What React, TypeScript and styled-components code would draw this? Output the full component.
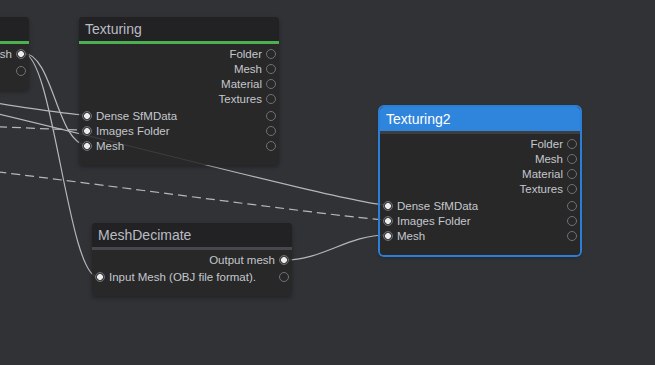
import React from "react";
import styled, { createGlobalStyle } from "styled-components";

const Global = createGlobalStyle`
  html, body { margin: 0; padding: 0; background: #313236; }
  #root { width: 655px; height: 365px; }
`;

const Canvas = styled.div`
  position: relative;
  width: 655px;
  height: 365px;
  overflow: hidden;
  background: #313236;
  font-family: "Liberation Sans", Arial, sans-serif;
`;

const EdgeLayer = styled.svg`
  position: absolute;
  left: 0;
  top: 0;
  width: 655px;
  height: 365px;
  overflow: visible;
`;

const NodeBox = styled.div<{ $selected?: boolean }>`
  position: absolute;
  width: 200px;
  border-radius: 4px;
  background: rgba(38, 38, 40, 0.86);
  box-shadow: ${(p) =>
    p.$selected ? "0 0 0 2px #2b7fd6, 0 2px 4px rgba(0,0,0,0.35)" : "0 2px 4px rgba(0,0,0,0.3)"};
  overflow: visible;
`;

const Header = styled.div<{ $blue?: boolean }>`
  height: 24px;
  line-height: 24px;
  padding: 0 6px;
  font-size: 14px;
  color: ${(p) => (p.$blue ? "#ffffff" : "#b9bdc3")};
  background: ${(p) => (p.$blue ? "#2f84dc" : "#222224")};
  border-radius: 4px 4px 0 0;
  white-space: nowrap;
  overflow: hidden;
`;

const Bar = styled.div<{ $color: string }>`
  height: 3px;
  background: ${(p) => p.$color};
`;

const Body = styled.div`
  display: flex;
  flex-direction: column;
  gap: 2px;
  padding: 2px 3px 12px 3px;
`;

const Group = styled.div`
  display: flex;
  flex-direction: column;
`;

const Row = styled.div<{ $out?: boolean }>`
  height: 15px;
  display: flex;
  align-items: center;
  justify-content: ${(p) => (p.$out ? "flex-end" : "flex-start")};
  gap: 4px;
`;

const Label = styled.span<{ $grow?: boolean }>`
  font-size: 11.5px;
  color: #c4c7cc;
  white-space: nowrap;
  flex: ${(p) => (p.$grow ? "1" : "none")};
  margin-left: ${(p) => (p.$grow ? "0" : "0")};
`;

const Port = styled.span<{ $on?: boolean }>`
  flex: none;
  width: 10px;
  height: 10px;
  box-sizing: border-box;
  border-radius: 50%;
  border: 1px solid #6f7175;
  background: ${(p) =>
    p.$on ? "radial-gradient(circle, #ececec 0 2.6px, #3a3a3c 3.2px)" : "transparent"};
`;

type Out = { label: string; on?: boolean };
type In = { label: string; on?: boolean; outOn?: boolean };

type NodeProps = {
  x: number;
  y: number;
  title: string;
  bar: string;
  blue?: boolean;
  selected?: boolean;
  outputs: Out[];
  inputs: In[];
};

function Node({ x, y, title, bar, blue, selected, outputs, inputs }: NodeProps) {
  return (
    <NodeBox $selected={selected} style={{ left: x, top: y }}>
      <Header $blue={blue}>{title}</Header>
      <Bar $color={bar} />
      <Body>
        <Group>
          {outputs.map((o) => (
            <Row $out key={o.label}>
              <Label>{o.label}</Label>
              <Port $on={o.on} />
            </Row>
          ))}
        </Group>
        <Group>
          {inputs.map((i) => (
            <Row key={i.label}>
              <Port $on={i.on} />
              <Label $grow>{i.label}</Label>
              <Port $on={i.outOn} />
            </Row>
          ))}
        </Group>
      </Body>
    </NodeBox>
  );
}

type Edge = { x1: number; y1: number; x2: number; y2: number; d: number; dashed?: boolean };

const edges: Edge[] = [
  { x1: 23, y1: 53, x2: 87, y2: 145, d: 30 },
  { x1: 23, y1: 53, x2: 98, y2: 277, d: 30 },
  { x1: -100, y1: 90, x2: 87, y2: 115, d: 30 },
  { x1: -100, y1: 94, x2: 387, y2: 205, d: 40 },
  { x1: -100, y1: 123, x2: 87, y2: 130, d: 30, dashed: true },
  { x1: -100, y1: 161, x2: 387, y2: 220, d: 30, dashed: true },
  { x1: 284, y1: 260, x2: 387, y2: 235, d: 40 },
];

function edgePath(e: Edge) {
  return `M ${e.x1} ${e.y1} C ${e.x1 + e.d} ${e.y1}, ${e.x2 - e.d} ${e.y2}, ${e.x2} ${e.y2}`;
}

export default function App() {
  return (
    <Canvas>
      <Global />
      <EdgeLayer viewBox="0 0 655 365">
        {edges.map((e, i) => (
          <path
            key={i}
            d={edgePath(e)}
            fill="none"
            stroke="#b6b7b9"
            strokeWidth={1.2}
            strokeDasharray={e.dashed ? "9 5" : undefined}
          />
        ))}
      </EdgeLayer>
      <Node
        x={-171}
        y={17}
        title="MeshFiltering"
        bar="#4caf50"
        outputs={[{ label: "Mesh", on: true }]}
        inputs={[{ label: "Input Mesh", on: true }]}
      />
      <Node
        x={79}
        y={17}
        title="Texturing"
        bar="#4caf50"
        outputs={[{ label: "Folder" }, { label: "Mesh" }, { label: "Material" }, { label: "Textures" }]}
        inputs={[
          { label: "Dense SfMData", on: true },
          { label: "Images Folder", on: true },
          { label: "Mesh", on: true },
        ]}
      />
      <Node
        x={92}
        y={223}
        title="MeshDecimate"
        bar="#47484b"
        outputs={[{ label: "Output mesh", on: true }]}
        inputs={[{ label: "Input Mesh (OBJ file format).", on: true }]}
      />
      <Node
        x={380}
        y={107}
        title="Texturing2"
        bar="#3d3e41"
        blue
        selected
        outputs={[{ label: "Folder" }, { label: "Mesh" }, { label: "Material" }, { label: "Textures" }]}
        inputs={[
          { label: "Dense SfMData", on: true },
          { label: "Images Folder", on: true },
          { label: "Mesh", on: true },
        ]}
      />
    </Canvas>
  );
}
